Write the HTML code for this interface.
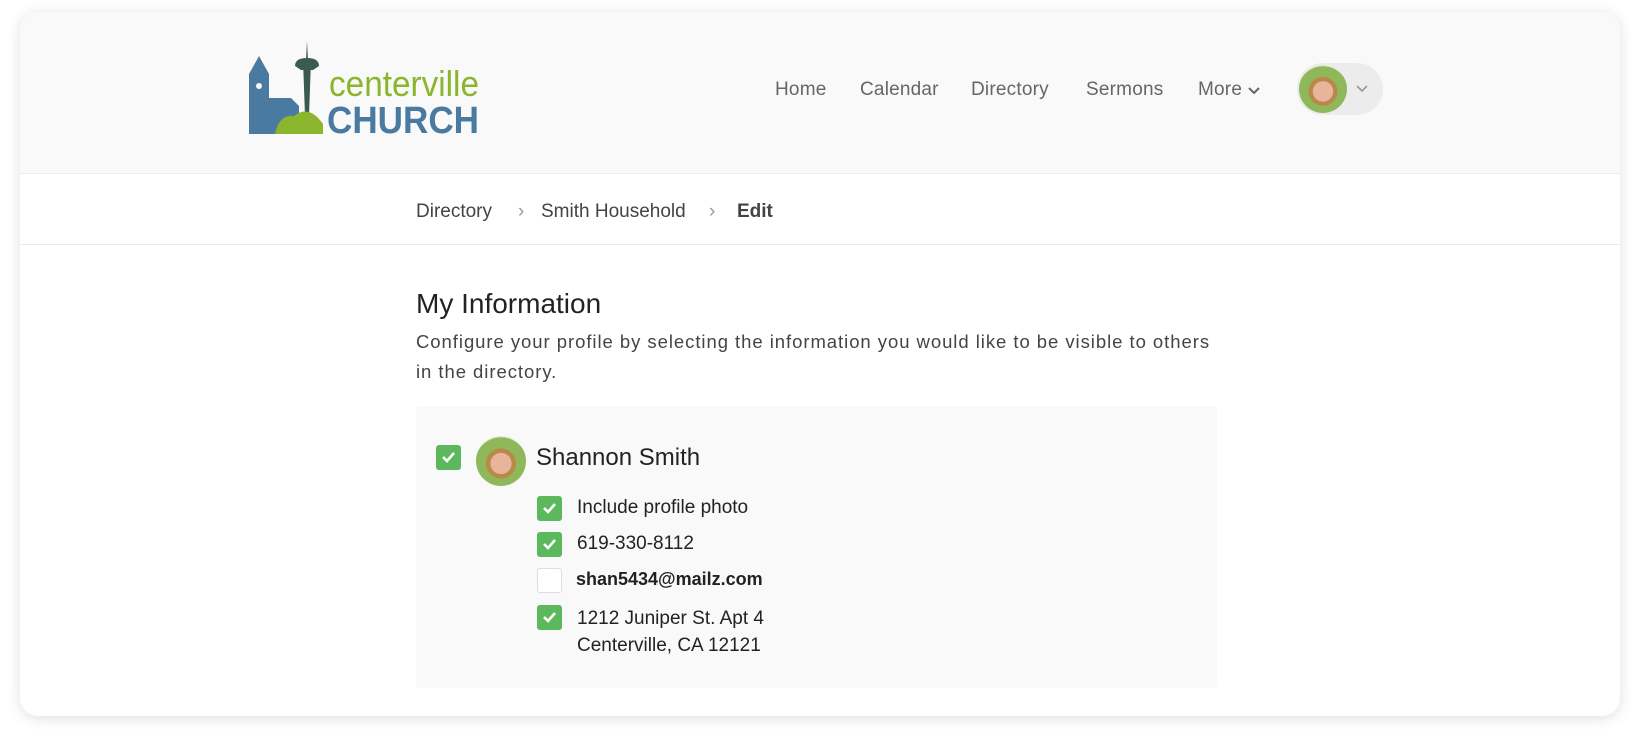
<!DOCTYPE html>
<html><head><meta charset="utf-8"><style>
*{margin:0;padding:0;box-sizing:border-box}
body{width:1640px;height:747px;background:#fff;font-family:"Liberation Sans",sans-serif;position:relative;overflow:hidden}
.card{position:absolute;left:20px;top:12px;width:1600px;height:704px;border-radius:18px;background:#fff;box-shadow:0 2px 14px rgba(0,0,0,.13);overflow:hidden}
.hdr{position:absolute;left:0;top:0;width:1600px;height:162px;background:#f9f9f9;border-bottom:1px solid #ececec}
.nav{position:absolute;top:67px;font-size:19px;color:#666;letter-spacing:0.2px}
.bc{position:absolute;top:189px;font-size:19px;color:#444}
.line{position:absolute;left:0;top:232px;width:1600px;height:1px;background:#ebebeb}
.cb{position:absolute;width:25px;height:25px;border-radius:3px;background:#5cb85c}
.cb svg{position:absolute;left:5px;top:6px}
.cb.off{background:#fff;border:1px solid #ddd}
.t{position:absolute;font-size:19px;color:#222}
.av{position:absolute;border-radius:50%;background:radial-gradient(circle at 50% 55%,#e8b59c 0 28%,#b88a4a 29% 40%,#8fb85a 41% 70%,#dfe9d0 71%)}
</style></head><body>
<div class="card">
<div class="hdr">
<svg style="position:absolute;left:229px;top:24px" width="240" height="100" viewBox="0 0 240 100">
<path d="M0 98V38L10 20L20 38V98Z" fill="#4a7aa0"/>
<circle cx="10" cy="50" r="3" fill="#f9f9f9"/>
<path d="M20 98V62H42L50 70V98Z" fill="#4a7aa0"/>
<path d="M58 5L59 24H62L60 80H56L54 24H57Z" fill="#3b5a50"/>
<path d="M46 30Q46 22 58 22Q70 22 70 30L64 34H52Z" fill="#3b5a50"/>
<path d="M26 98Q30 78 45 80Q60 68 74 88V98Z" fill="#8ab52c"/>
<text x="80" y="60" font-size="36" fill="#8ab52c" font-family="Liberation Sans" textLength="150" lengthAdjust="spacingAndGlyphs">centerville</text>
<text x="78" y="97" font-size="38" fill="#4a7aa0" font-family="Liberation Sans" font-weight="bold" textLength="152" lengthAdjust="spacingAndGlyphs">CHURCH</text>
</svg>
<div class="nav" style="left:755px">Home</div>
<div class="nav" style="left:840px">Calendar</div>
<div class="nav" style="left:951px">Directory</div>
<div class="nav" style="left:1066px">Sermons</div>
<div class="nav" style="left:1178px">More <svg width="12" height="8" viewBox="0 0 12 8"><path d="M1 1l5 5 5-5" stroke="#666" stroke-width="2" fill="none"/></svg></div>
<div style="position:absolute;left:1277px;top:51px;width:86px;height:52px;border-radius:26px;background:#ececec"></div>
<div class="av" style="left:1279px;top:53px;width:48px;height:48px"></div>
<svg style="position:absolute;left:1336px;top:73px" width="12" height="8" viewBox="0 0 12 8"><path d="M1 1l5 5 5-5" stroke="#999" stroke-width="1.6" fill="none"/></svg>
</div>
<div class="bc" style="left:396px">Directory</div>
<div class="bc" style="left:498px;color:#999">›</div>
<div class="bc" style="left:521px">Smith Household</div>
<div class="bc" style="left:689px;color:#999">›</div>
<div class="bc" style="left:717px;font-weight:bold">Edit</div>
<div class="line"></div>
<div style="position:absolute;left:396px;top:276px;font-size:28px;color:#222">My Information</div>
<div style="position:absolute;left:396px;top:315px;width:900px;font-size:18.5px;line-height:30px;color:#444;letter-spacing:0.95px;white-space:nowrap">Configure your profile by selecting the information you would like to be visible to others<br>in the directory.</div>
<div style="position:absolute;left:396px;top:394px;width:801px;height:282px;background:#f9f9f9;border-radius:4px"></div>
<div class="cb" style="left:416px;top:433px"><svg width="15" height="12" viewBox="0 0 15 12"><path d="M2 6l4 4 7-8" stroke="#fff" stroke-width="2.6" fill="none"/></svg></div>
<div class="av" style="left:456px;top:424px;width:50px;height:50px"></div>
<div class="t" style="left:516px;top:432px;font-size:24px">Shannon Smith</div>
<div class="cb" style="left:517px;top:484px"><svg width="15" height="12" viewBox="0 0 15 12"><path d="M2 6l4 4 7-8" stroke="#fff" stroke-width="2.6" fill="none"/></svg></div>
<div class="t" style="left:557px;top:485px">Include profile photo</div>
<div class="cb" style="left:517px;top:520px"><svg width="15" height="12" viewBox="0 0 15 12"><path d="M2 6l4 4 7-8" stroke="#fff" stroke-width="2.6" fill="none"/></svg></div>
<div class="t" style="left:557px;top:521px">619-330-8112</div>
<div class="cb off" style="left:517px;top:556px"></div>
<div class="t" style="left:556px;top:557px;font-weight:bold;font-size:18px">shan5434@mailz.com</div>
<div class="cb" style="left:517px;top:593px"><svg width="15" height="12" viewBox="0 0 15 12"><path d="M2 6l4 4 7-8" stroke="#fff" stroke-width="2.6" fill="none"/></svg></div>
<div class="t" style="left:557px;top:593px;line-height:27px">1212 Juniper St. Apt 4<br>Centerville, CA 12121</div>
</div>
</body></html>
